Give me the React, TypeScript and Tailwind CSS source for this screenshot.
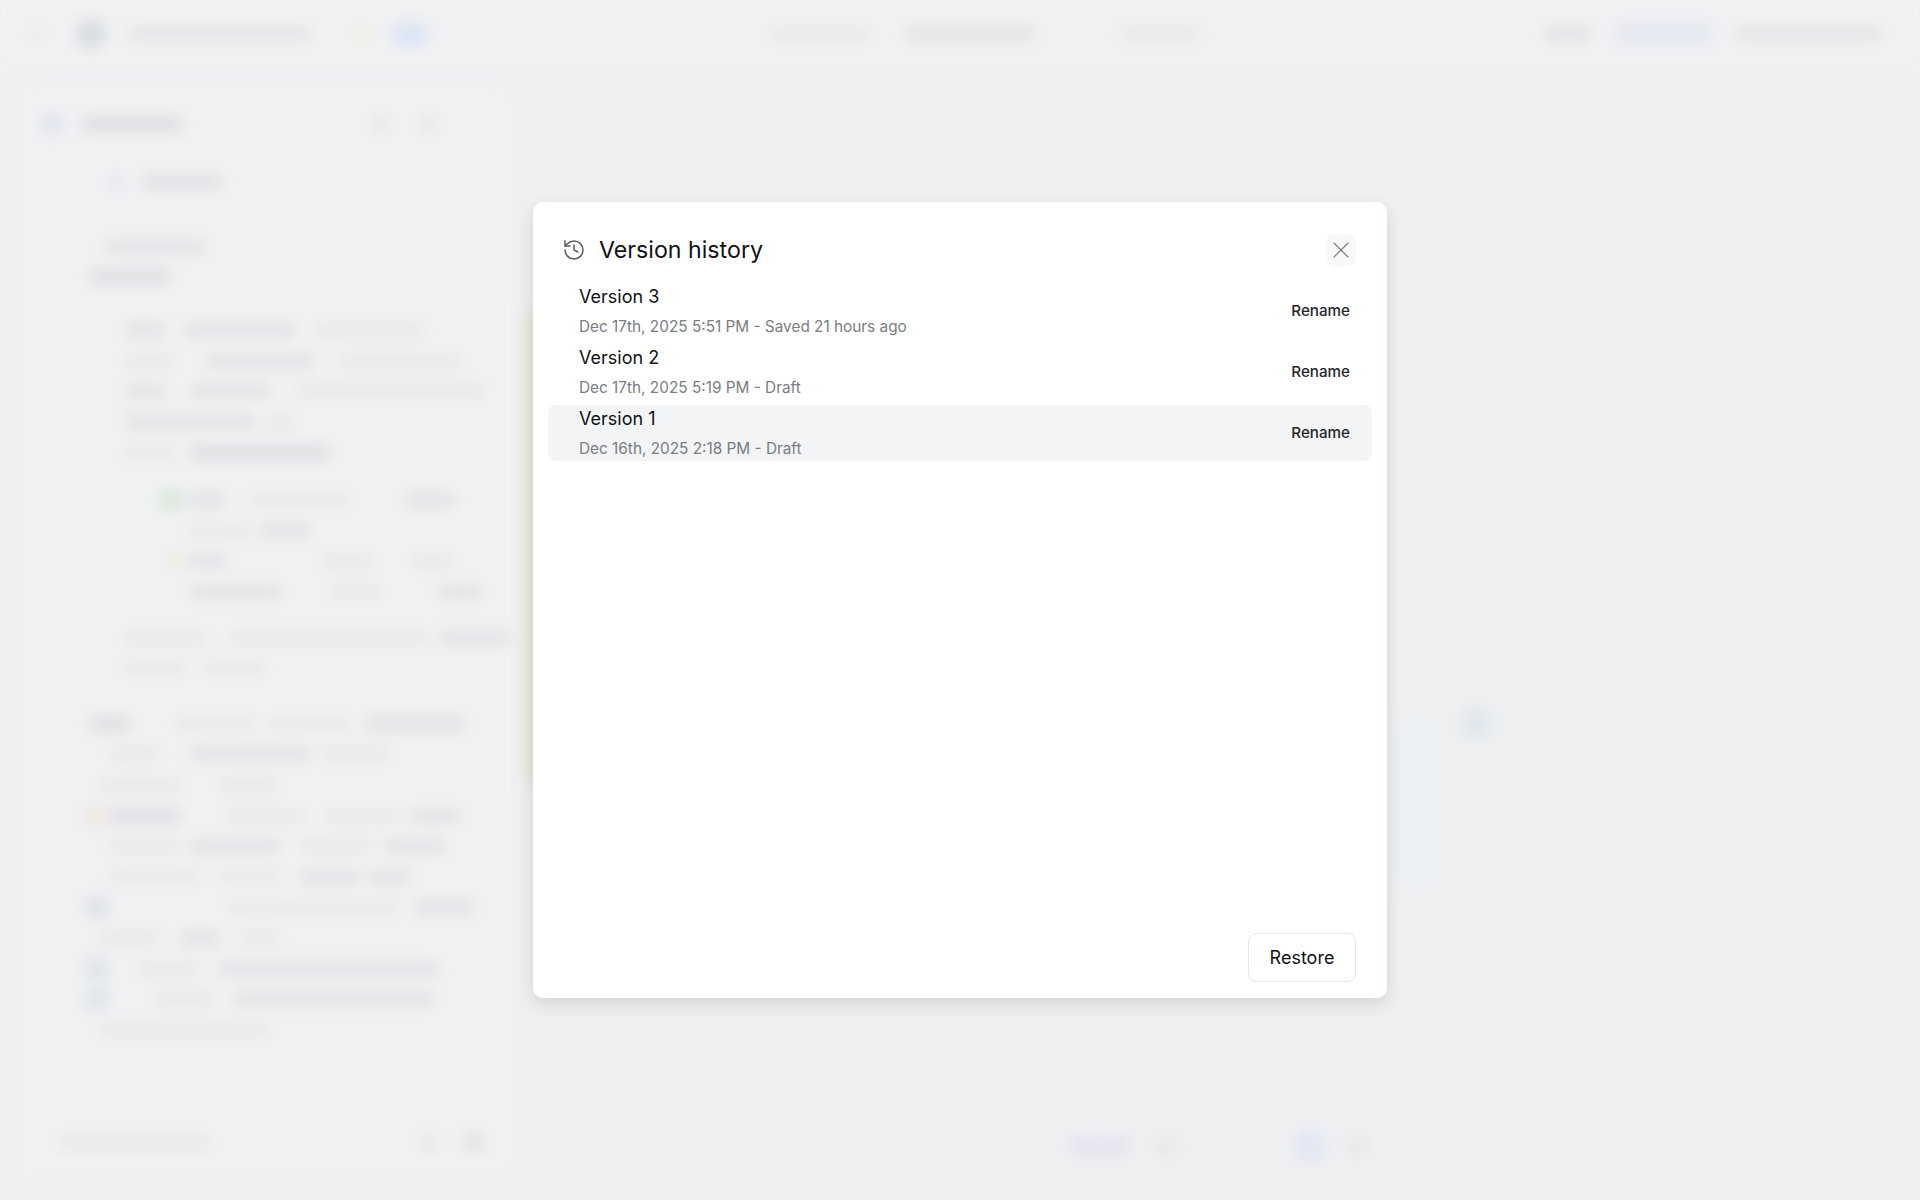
import React from "react";
import { History, X } from "lucide-react";

type Seg = { w: number; c?: string; ml?: number; h?: number };
type Line = { ml: number; segs: Seg[] };

const D = "bg-[#e2e3e6]";
const L = "bg-[#e8e9eb]";

function Blob({ w, h = 14, c = "bg-[#e2e3e6]", ml = 0, r = "rounded" }: { w: number; h?: number; c?: string; ml?: number; r?: string }) {
  return <div className={`${c} ${r} shrink-0`} style={{ width: w, height: h, marginLeft: ml }} />;
}

const block1: Line[] = [
  { ml: 105, segs: [{ w: 40 }, { w: 110, ml: 20 }, { w: 110, ml: 20, c: L }] },
  { ml: 105, segs: [{ w: 50, c: L }, { w: 110, ml: 30 }, { w: 120, ml: 25, c: L }] },
  { ml: 105, segs: [{ w: 40 }, { w: 80, ml: 25 }, { w: 190, ml: 25, c: L }] },
  { ml: 105, segs: [{ w: 130 }, { w: 30, ml: 10, c: L }] },
  { ml: 105, segs: [{ w: 50, c: L }, { w: 140, ml: 15, c: "bg-[#dddee1]" }] },
];
const block1b: Line[] = [
  { ml: 140, segs: [{ w: 20, h: 20, c: "bg-[#d8e8d8]" }, { w: 40, ml: 5 }, { w: 100, ml: 25, c: L }, { w: 50, ml: 55 }] },
  { ml: 170, segs: [{ w: 60, c: L }, { w: 50, ml: 10 }] },
  { ml: 148, segs: [{ w: 14, h: 20, c: "bg-[#efede0]" }, { w: 40, ml: 5 }, { w: 50, ml: 95, c: L }, { w: 40, ml: 40, c: L }] },
  { ml: 170, segs: [{ w: 90 }, { w: 50, ml: 50, c: L }, { w: 40, ml: 60 }] },
];
const block3: Line[] = [
  { ml: 105, segs: [{ w: 80, c: L }, { w: 200, ml: 25, c: L }, { w: 70, ml: 10 }] },
  { ml: 105, segs: [{ w: 60, c: L }, { w: 60, ml: 20, c: L }] },
];
const block2: Line[] = [
  { ml: 70, segs: [{ w: 40, c: "bg-[#dddee1]" }, { w: 80, ml: 45, c: L }, { w: 80, ml: 15, c: L }, { w: 100, ml: 15 }] },
  { ml: 90, segs: [{ w: 50, c: L }, { w: 120, ml: 30 }, { w: 70, ml: 10, c: L }] },
  { ml: 80, segs: [{ w: 80, c: L }, { w: 60, ml: 40, c: L }] },
  { ml: 65, segs: [{ w: 20, h: 22, c: "bg-[#f0e9e0]" }, { w: 70, ml: 5, c: "bg-[#dddee1]" }, { w: 80, ml: 45, c: L }, { w: 70, ml: 20, c: L }, { w: 50, ml: 15 }] },
  { ml: 90, segs: [{ w: 70, c: L }, { w: 90, ml: 10 }, { w: 70, ml: 20, c: L }, { w: 60, ml: 15 }] },
  { ml: 90, segs: [{ w: 90, c: L }, { w: 60, ml: 20, c: L }, { w: 60, ml: 20 }, { w: 40, ml: 10 }] },
  { ml: 65, segs: [{ w: 24, h: 22, c: "bg-[#dfe3e8]" }, { w: 170, ml: 120, c: L }, { w: 60, ml: 15 }] },
  { ml: 80, segs: [{ w: 60, c: L }, { w: 40, ml: 20 }, { w: 40, ml: 20, c: L }] },
  { ml: 65, segs: [{ w: 24, h: 22, c: "bg-[#e0e4e9]" }, { w: 60, ml: 30, c: L }, { w: 220, ml: 20 }] },
  { ml: 65, segs: [{ w: 24, h: 22, c: "bg-[#dfe5ec]" }, { w: 60, ml: 45, c: L }, { w: 200, ml: 20 }] },
  { ml: 80, segs: [{ w: 170, c: L }] },
];

function Lines({ lines, pitch = 30.6 }: { lines: Line[]; pitch?: number }) {
  return (
    <div className="flex flex-col">
      {lines.map((l, i) => (
        <div key={i} className="flex items-center" style={{ height: pitch, marginLeft: l.ml }}>
          {l.segs.map((s, j) => (
            <Blob key={j} w={s.w} h={s.h} ml={s.ml} c={s.c ?? D} />
          ))}
        </div>
      ))}
    </div>
  );
}

function Row({ title, sub, active }: { title: string; sub: string; active?: boolean }) {
  return (
    <div className={`flex h-[56px] justify-between rounded-lg pl-[31px] pr-[22px] ${active ? "bg-[#f2f4f5]" : ""}`}>
      <div className="flex flex-col">
        <div className="text-[18px] leading-7 text-[#111214]">{title}</div>
        <div className="mt-1 text-[15.35px] leading-6 text-[#7a7d82]">{sub}</div>
      </div>
      <button className="self-center text-[15.2px] font-medium leading-6 text-[#25262a]">Rename</button>
    </div>
  );
}

export default function App() {
  return (
    <div className="relative h-[1200px] w-full overflow-hidden bg-[#eff0f2] font-['Inter',sans-serif]">
      {/* blurred page behind the dialog */}
      <div className="flex h-full flex-col blur-[7px]">
        <header className="flex h-[68px] items-center bg-[#f0f1f3] pl-[30px] pr-[30px]">
          <Blob w={12} h={14} c="bg-[#e9eaec]" />
          <Blob w={30} h={30} ml={34} c="bg-[#d9dde1]" r="rounded-full" />
          <Blob w={180} h={12} ml={24} c="bg-[#e2e3e6]" />
          <Blob w={20} h={20} ml={42} c="bg-[#f3efe2]" r="rounded-full" />
          <Blob w={36} h={24} ml={20} c="bg-[#dbe5f3]" r="rounded-full" />
          <div className="ml-[342px] flex items-center">
            <Blob w={100} h={14} c="bg-[#e8e9eb]" />
            <Blob w={130} h={16} ml={35} c="bg-[#e4e5e7]" />
            <Blob w={80} h={14} ml={85} c="bg-[#e8e9eb]" />
          </div>
          <Blob w={45} h={14} ml={345} c="bg-[#e2e3e6]" />
          <Blob w={95} h={24} ml={26} c="bg-[#e6e9f1]" />
          <Blob w={145} h={14} ml={25} c="bg-[#e4e5e8]" />
        </header>
        <div className="flex flex-1">
          <aside className="ml-5 mt-[22px] mb-[30px] flex w-[490px] flex-col bg-[#f0f1f3] pr-2">
            <div className="mt-[22px] flex items-center">
              <Blob w={24} h={24} ml={20} c="bg-[#e3e6f0]" r="rounded-full" />
              <Blob w={100} h={14} ml={18} c="bg-[#dcdde0]" />
              <Blob w={18} h={18} ml={190} c="bg-[#e8e9eb]" />
              <Blob w={18} h={18} ml={30} c="bg-[#e8e9eb]" />
            </div>
            <div className="mt-[38px] flex items-center">
              <Blob w={16} h={16} ml={88} c="bg-[#e6e8f0]" r="rounded-full" />
              <Blob w={80} h={14} ml={18} c="bg-[#e0e1e4]" />
            </div>
            <div className="mt-[50px] flex flex-col">
              <Blob w={100} h={14} ml={85} />
              <Blob w={80} h={14} ml={70} c="bg-[#dddee1] mt-4" />
            </div>
            <div className="mt-[31px]">
              <Lines lines={block1} />
            </div>
            <div className="mt-[17px]">
              <Lines lines={block1b} />
            </div>
            <div className="mt-[15px]">
              <Lines lines={block3} />
            </div>
            <div className="mt-[25px]">
              <Lines lines={block2} />
            </div>
            <div className="mt-auto mb-[18px] flex items-center">
              <Blob w={150} h={14} ml={40} c="bg-[#e8e9eb]" />
              <Blob w={18} h={18} ml={210} c="bg-[#e8e9eb]" />
              <Blob w={20} h={20} ml={26} c="bg-[#e3e4e6]" />
            </div>
          </aside>
          <main className="flex flex-1 flex-col">
            <div className="ml-[15px] mt-[244px] h-[470px] w-[20px] bg-[#e6e5d6]" />
            <div className="mb-[37px] mt-auto flex items-center">
              <Blob w={60} h={18} ml={560} c="bg-[#e4e4f0]" />
              <Blob w={24} h={20} ml={25} c="bg-[#e8e9eb]" />
              <Blob w={34} h={34} ml={114} c="bg-[#e2e7f3]" r="rounded-full" />
              <Blob w={22} h={20} ml={20} c="bg-[#e8e9eb]" />
            </div>
          </main>
          <div className="flex w-[460px] pt-[640px]">
            <div className="-ml-[65px] mt-[10px] h-[170px] w-[40px] bg-[#ecf0f3]" />
            <Blob w={30} h={30} ml={26} c="bg-[#e0e7ec]" />
          </div>
        </div>
      </div>

      {/* dialog layer */}
      <div className="absolute inset-0 flex items-center justify-center">
        <div className="flex h-[796px] w-[854px] flex-col rounded-[10px] bg-white pt-8 shadow-[0_6px_18px_rgba(0,0,0,0.12)]">
          <div className="flex h-8 items-center pl-[29px] pr-[31px]">
            <History size={24} strokeWidth={1.5} className="text-[#5a5d61]" />
            <h2 className="ml-[13px] mt-px text-[23.2px] font-normal text-[#111214]">Version history</h2>
            <button className="ml-auto flex h-8 w-[30px] items-center justify-center rounded-lg bg-[#f7f8f9] text-[#7a7d81]">
              <X size={28} strokeWidth={1} />
            </button>
          </div>
          <div className="mx-[15px] mt-[17px] flex flex-col gap-[5px]">
            <Row title="Version 3" sub="Dec 17th, 2025 5:51 PM - Saved 21 hours ago" />
            <Row title="Version 2" sub="Dec 17th, 2025 5:19 PM - Draft" />
            <Row title="Version 1" sub="Dec 16th, 2025 2:18 PM - Draft" active />
          </div>
          <div className="mt-auto flex justify-end pb-4 pr-[31px]">
            <button className="h-[49px] w-[108px] rounded-lg border border-[#e5e7e9] bg-white text-[18px] text-[#111214]">Restore</button>
          </div>
        </div>
      </div>
    </div>
  );
}
